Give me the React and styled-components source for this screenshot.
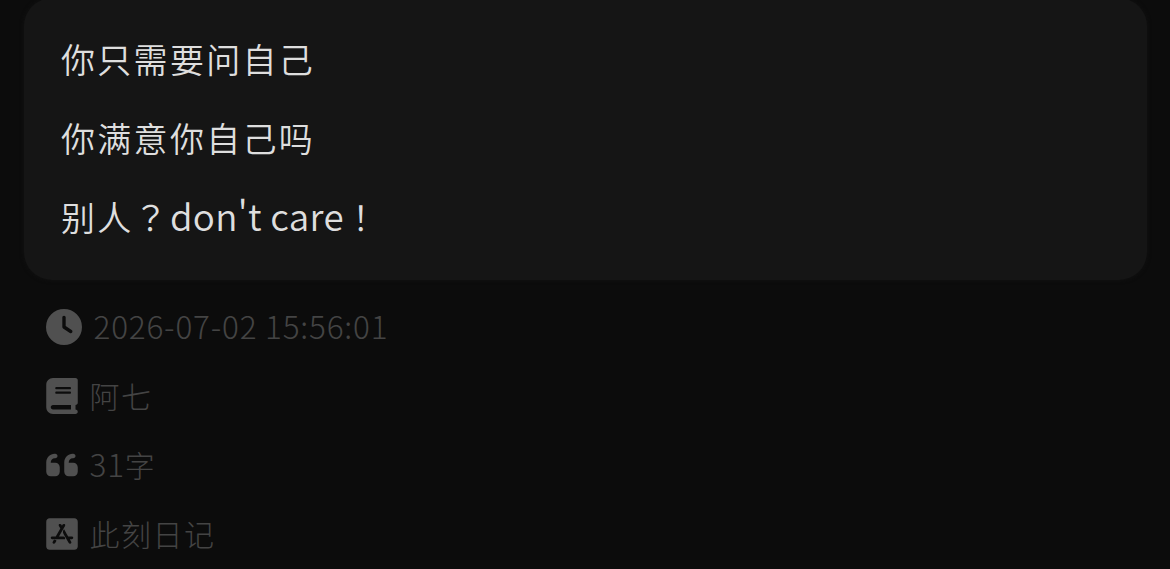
import styled, { createGlobalStyle } from 'styled-components'
import { FaClock, FaBook, FaQuoteLeft, FaAppStoreIos } from 'react-icons/fa6'

const GlobalStyle = createGlobalStyle`
    body {
        margin: 0;
        background: #0c0c0c;
        font-family: 'Noto Sans CJK SC', sans-serif;
    }
`

const Page = styled.main`
    box-sizing: border-box;
    height: 569px;
    padding: 0 23px 0 24px;
    overflow: hidden;
`

const Card = styled.section`
    box-sizing: border-box;
    height: 282px;
    margin-top: -2px;
    padding: 21px 37px;
    border-radius: 28px;
    background: #151515;
    box-shadow: 0 0 4px #121212;
`

const Line = styled.p`
    margin: 0;
    height: 79px;
    color: #dedede;
    font-size: 34px;
    font-weight: 350;
    line-height: 79px;
    letter-spacing: 2.3px;
    white-space: nowrap;
`

// latin runs are set a little larger and tighter than the hanzi
const Latin = styled.span`
    font-size: 1.08em;
    letter-spacing: 0.3px;
    line-height: 1;
`

// full-width marks sit in the middle of their square
const Mark = styled.span`
    font-family: 'Noto Sans CJK TC', sans-serif;
    line-height: 1;
`

const MetaList = styled.div`
    padding: 12px 21.5px 0;
`

const MetaRow = styled.div`
    display: flex;
    align-items: center;
    gap: 12px;
    height: 69px;
    color: #505050;

    svg {
        flex: none;
        width: ${(props) => props.$iconWidth}px;
        height: 36px;
    }
`

const MetaText = styled.span`
    height: 46px;
    color: #444444;
    font-size: 30px;
    font-weight: 300;
    line-height: 44px;
    letter-spacing: 1.5px;
    white-space: nowrap;

    ${Latin} {
        font-size: 31.5px;
        letter-spacing: 0.8px;
    }
`

const lines = ['你只需要问自己', '你满意你自己吗', "别人？don't care！"]

const meta = [
    { icon: FaClock, width: 36, text: '2026-07-02 15:56:01' },
    { icon: FaBook, width: 32, text: '阿七' },
    { icon: FaQuoteLeft, width: 32, text: '31字' },
    { icon: FaAppStoreIos, width: 32, text: '此刻日记' },
]

function MixedText({ children }) {
    return children.split(/([\x20-\x7e]+|[？！])/).map((run, i) => {
        if (/^[\x20-\x7e]/.test(run)) return <Latin key={i}>{run}</Latin>
        if (/^[？！]/.test(run)) return <Mark key={i} lang="zh-TW">{run}</Mark>
        return run
    })
}

export default function App() {
    return (
        <Page lang="zh-CN">
            <GlobalStyle />
            <Card>
                {lines.map((line) => (
                    <Line key={line}><MixedText>{line}</MixedText></Line>
                ))}
            </Card>
            <MetaList>
                {meta.map(({ icon: Icon, width, text }) => (
                    <MetaRow key={text} $iconWidth={width}>
                        <Icon />
                        <MetaText><MixedText>{text}</MixedText></MetaText>
                    </MetaRow>
                ))}
            </MetaList>
        </Page>
    )
}
